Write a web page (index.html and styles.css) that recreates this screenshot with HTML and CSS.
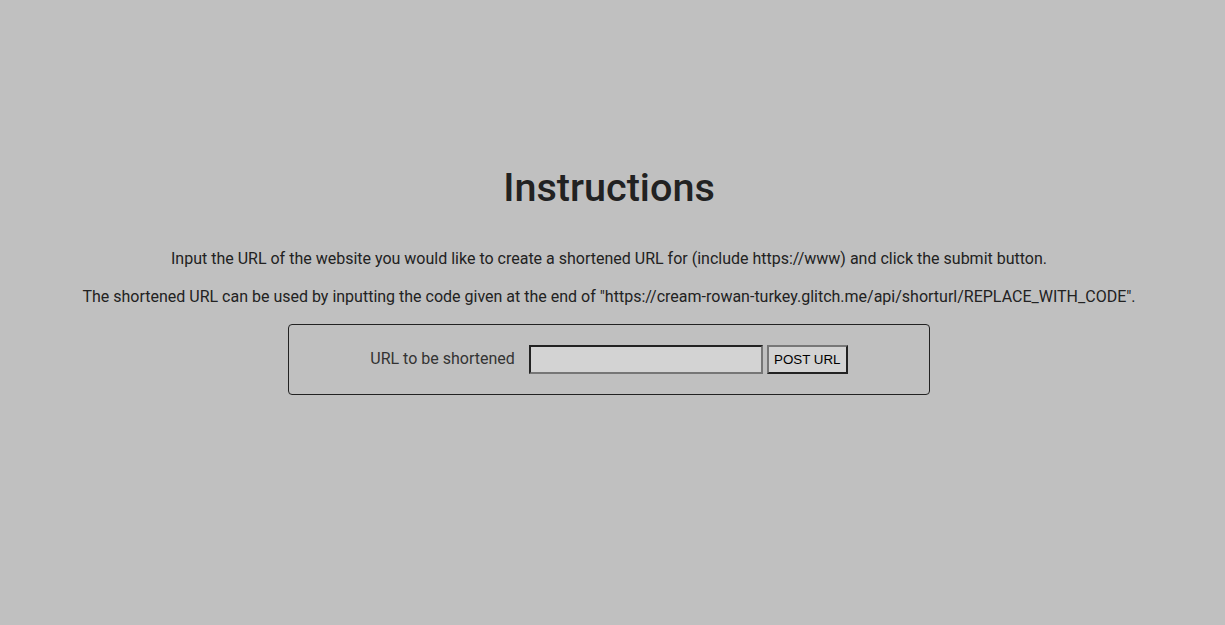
FILE: index.html
```html
<!DOCTYPE html>
<html>
<head>
<meta charset="utf-8">
<link rel="stylesheet" href="styles.css">
<title>URL Shortener</title>
</head>
<body>
<main class="page">
  <h1 class="title">Instructions</h1>
  <p class="text">Input the URL of the website you would like to create a shortened URL for (include https://www) and click the submit button.</p>
  <p class="text">The shortened URL can be used by inputting the code given at the end of "https://cream-rowan-turkey.glitch.me/api/shorturl/REPLACE_WITH_CODE".</p>
  <form class="card">
    <label class="label" for="url">URL to be shortened</label>
    <input class="input" id="url" type="text">
    <button class="btn" type="button">POST URL</button>
  </form>
</main>
</body>
</html>
```
FILE: styles.css
```css
html, body {
  margin: 0;
  background: #c0c0c0;
}
body {
  font-family: Roboto, "Liberation Sans", sans-serif;
  color: #222;
}
.page {
  width: 1218px;
  display: flex;
  flex-direction: column;
  align-items: center;
  padding-top: 163px;
}
.title {
  font-size: 39.6px;
  font-weight: 500;
  margin: 0 0 36px;
  line-height: 50px;
}
.text {
  font-size: 16px;
  line-height: 20px;
  margin: 0 0 18px;
}
.card {
  box-sizing: border-box;
  width: 642px;
  height: 71px;
  margin-top: -1px;
  border: 1px solid #222;
  border-radius: 4px;
  display: flex;
  align-items: center;
  justify-content: center;
}
.label {
  font-size: 16px;
  margin: 0 14px 2px 0;
  color: #333;
}
.input {
  box-sizing: border-box;
  width: 234px;
  height: 29px;
  background: #d3d3d3;
  border: 2px solid;
  border-color: #222 #767676 #767676 #222;
  margin: 0 4px 0 0;
}
.btn {
  box-sizing: border-box;
  height: 29px;
  width: 81px;
  font-family: "Liberation Sans", Arial, sans-serif;
  font-size: 13.33px;
  color: #000;
  background: #d3d3d3;
  border: 2px solid;
  border-color: #777 #222 #222 #777;
  padding: 0;
}
```
